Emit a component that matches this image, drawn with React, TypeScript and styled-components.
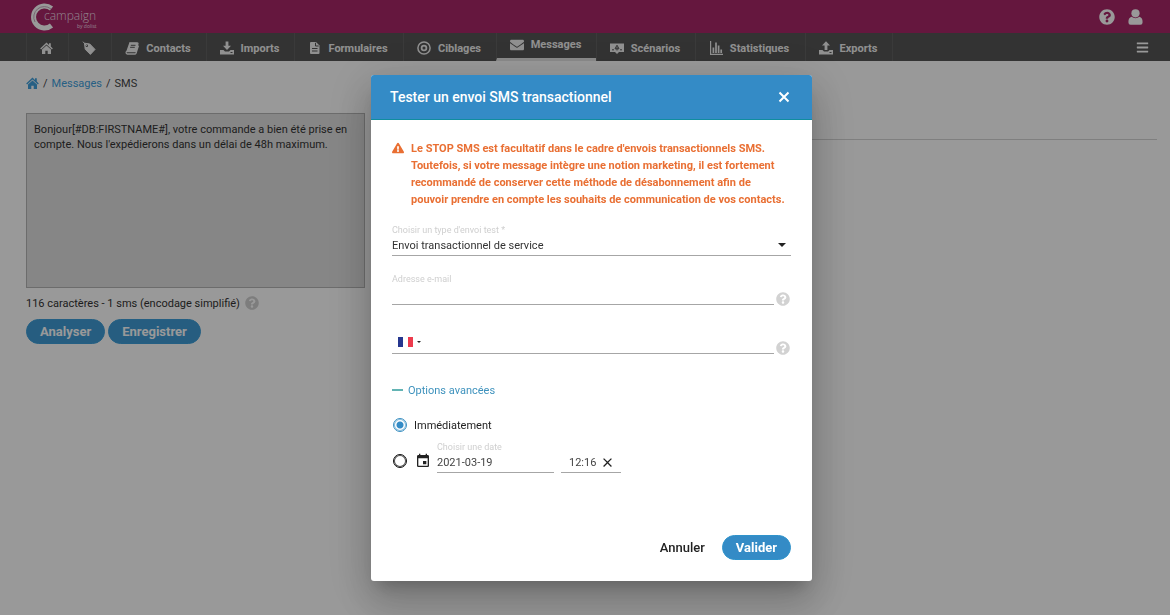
import React from "react";
import styled, { createGlobalStyle, css } from "styled-components";
import { FaEnvelope, FaQuestionCircle, FaExclamationTriangle, FaBars } from "react-icons/fa";
import { MdClose, MdEvent } from "react-icons/md";

const GlobalStyle = createGlobalStyle`
  * { box-sizing: border-box; }
  body {
    margin: 0;
    background: #fff;
    color: #333;
    font-family: Roboto, "Liberation Sans", sans-serif;
    font-size: 11px;
  }
  button, input, select, textarea { font-family: inherit; }
`;

const Page = styled.div`
  min-height: 100vh;
`;

const TopBar = styled.header`
  display: flex;
  align-items: center;
  justify-content: space-between;
  height: 33px;
  padding: 0 27px 0 30px;
  background: #a82768;
  color: #fff;
`;

const TopActions = styled.div`
  display: flex;
  gap: 13px;
`;

const IconButton = styled.button`
  display: flex;
  align-items: center;
  justify-content: center;
  padding: 0;
  border: 0;
  background: none;
  color: inherit;
  cursor: pointer;
`;

const NavBar = styled.nav`
  display: flex;
  align-items: stretch;
  height: 28px;
  padding: 0 21px 0 26px;
  background: #555;
  color: #fff;
`;

const NavItem = styled.a<{ $width: number; $active?: boolean }>`
  display: flex;
  align-items: center;
  justify-content: center;
  gap: 7px;
  width: ${(p) => p.$width}px;
  padding: 2px 2px 0 0;
  border-left: 1px solid #626262;
  color: #f0f0f0;
  font-size: 11px;
  font-weight: 700;
  text-decoration: none;
  svg { flex: none; }
  ${(p) => p.$active && css`
    padding: 0 2px 2px 0;
    border-bottom: 3px solid #e6e6e6;
  `}
`;

const NavEnd = styled.div`
  display: flex;
  flex: 1;
  justify-content: flex-end;
  border-left: 1px solid #626262;
`;

const Content = styled.main`
  display: grid;
  grid-template-columns: 339px 1fr;
  column-gap: 20px;
  padding: 14px 13px 0 26px;
`;

const Breadcrumb = styled.div`
  display: flex;
  align-items: center;
  gap: 4px;
  grid-column: 1 / -1;
  height: 16px;
  margin-bottom: 22px;
  color: #444;
  font-size: 11px;
  a { color: #41a0dc; text-decoration: none; }
  svg { display: block; }
`;

const MessageBox = styled.textarea`
  display: block;
  width: 100%;
  height: 175px;
  padding: 8px 7px;
  border: 1px solid #b5b5b5;
  background: #e0e0e0;
  color: #333;
  font-size: 11px;
  line-height: 15px;
  resize: none;
`;

const CountLine = styled.div`
  display: flex;
  align-items: center;
  gap: 5px;
  height: 14px;
  margin: 8px 0 9px;
  font-size: 11px;
  color: #333;
  svg { color: #d0d0d0; }
`;

const ButtonRow = styled.div`
  display: flex;
  gap: 3px;
`;

const PillButton = styled.button`
  height: 25px;
  padding: 0 13px;
  border: 1px solid #2f93cb;
  border-radius: 13px;
  background: #348bc6;
  color: #fff;
  font-size: 13px;
  font-weight: 700;
  cursor: pointer;
`;

const PagePillButton = styled(PillButton)`
  border-color: #3d9fda;
  background: #409cd6;
`;

const Preview = styled.section`
  height: 27px;
  border-bottom: 1px solid #d4d4d4;
`;

const Overlay = styled.div`
  position: fixed;
  inset: 0;
  display: flex;
  align-items: flex-start;
  justify-content: center;
  padding: 75px 0 0 13px;
  background: rgba(0, 0, 0, 0.4);
`;

const Dialog = styled.div`
  width: 441px;
  border-radius: 3px;
  overflow: hidden;
  background: #fff;
  box-shadow: 0 11px 15px -7px rgba(0, 0, 0, 0.2), 0 24px 38px 3px rgba(0, 0, 0, 0.14),
    0 9px 46px 8px rgba(0, 0, 0, 0.12);
`;

const DialogHeader = styled.div`
  display: flex;
  align-items: center;
  justify-content: space-between;
  height: 45px;
  padding: 0 20px 0 19px;
  border-bottom: 1px solid #108d9e;
  background: #348bc6;
  color: #fff;
`;

const DialogTitle = styled.h2`
  margin: 0;
  font-size: 14px;
  font-weight: 500;
`;

const DialogBody = styled.form`
  padding: 20px 21px 21px;
`;

const Warning = styled.div`
  display: flex;
  gap: 7px;
  margin-bottom: 17px;
  color: #e96f33;
  svg { flex: none; margin-top: 2px; }
`;

const WarningText = styled.p`
  margin: 0;
  font-size: 11px;
  font-weight: 700;
  line-height: 17px;
  white-space: nowrap;
`;

const FieldRow = styled.div`
  display: flex;
  align-items: flex-end;
  gap: 2px;
  margin-bottom: 18px;
  color: #d2d2d2;
`;

const Field = styled.div<{ $width?: number }>`
  display: flex;
  flex-direction: column;
  ${(p) => (p.$width ? css`width: ${p.$width}px;` : css`flex: 1;`)}
`;

const Label = styled.label`
  height: 10px;
  color: #cfcfcf;
  font-size: 9px;
  line-height: 10px;
`;

const Line = styled.div`
  display: flex;
  align-items: center;
  height: 21px;
  border-bottom: 1px solid #a6a6a6;
`;

const PhoneLine = styled(Line)`
  height: 31px;
  padding: 8px 0 0 6px;
`;

const TextInput = styled.input`
  flex: 1;
  min-width: 0;
  height: 18px;
  padding: 0;
  border: 0;
  outline: 0;
  background: transparent;
  color: #444;
  font-size: 11px;
`;

const Select = styled.select`
  flex: 1;
  height: 18px;
  padding: 0;
  border: 0;
  outline: 0;
  appearance: none;
  background: transparent;
  color: #333;
  font-size: 11px;
`;

const CaretBox = styled.span`
  display: flex;
  padding-right: 5px;
  pointer-events: none;
`;

const CountryButton = styled(IconButton)`
  gap: 4px;
  margin-right: 8px;
`;

const HelpButton = styled(IconButton)`
  margin: 0 1px -1px 0;
`;

const OptionsToggle = styled.button`
  display: flex;
  align-items: center;
  gap: 5px;
  height: 14px;
  margin-top: 29px;
  padding: 0;
  border: 0;
  background: none;
  color: #3e92bd;
  font-size: 11px;
  cursor: pointer;
`;

const Choice = styled.label`
  display: flex;
  align-items: center;
  gap: 7px;
  height: 16px;
  margin-top: 20px;
  padding-left: 1px;
  color: #222;
  font-size: 11px;
`;

const Radio = styled.input`
  flex: none;
  width: 14px;
  height: 14px;
  margin: 0;
  appearance: none;
  border: 1px solid #111;
  border-radius: 50%;
  box-shadow: inset 0 0 0 1px #555;
  &:checked {
    border-color: #3a8fc0;
    background: radial-gradient(circle, #348bc6 0 3px, #fff 4px);
    box-shadow: inset 0 0 0 1px #8fc0de;
  }
`;

const DateRow = styled.div`
  display: flex;
  align-items: flex-end;
  margin-top: 9px;
  padding-left: 1px;
`;

const DateChoice = styled.div`
  display: flex;
  align-items: center;
  gap: 8px;
  height: 25px;
  margin-right: 6px;
  color: #222;
`;

const TimeField = styled(Line)`
  width: 60px;
  margin-left: 7px;
  padding: 0 6px 0 8px;
`;

const Actions = styled.div`
  display: flex;
  align-items: center;
  justify-content: flex-end;
  gap: 17px;
  margin-top: 62px;
`;

const TextButton = styled.button`
  padding: 0;
  border: 0;
  background: none;
  color: #222;
  font-size: 13px;
  font-weight: 500;
  cursor: pointer;
`;

function Logo() {
  return (
    <svg width="68" height="30" viewBox="0 0 68 30" role="img" aria-label="Campaign by dolist">
      <path d="M21.500 6.500A11 11 0 1 0 21.500 23.500" fill="none" stroke="#fff" strokeWidth="5" />
      <path d="M21 7A10.500 10.500 0 0 0 5 20" fill="none" stroke="#c9a9bd" strokeWidth="1" />
      <text x="14" y="18" fill="#f0dce7" fontFamily="'Open Sans', sans-serif" fontSize="12" fontWeight="300">campaign</text>
      <text x="47" y="26" fill="#f0dce7" fontFamily="'Open Sans', sans-serif" fontSize="5">by dolist</text>
    </svg>
  );
}

function HomeIcon() {
  return (
    <svg width="13" height="12" viewBox="0 0 13 12" fill="currentColor">
      <path d="M6.500 .6 9 2.900V1.200h1.800v3.400L12.800 6.400l-.9 1L6.500 2.600 1.100 7.400l-.9-1z" />
      <path d="M6.500 3.500 11 7.400V12H7.700V8.700H5.300V12H2V7.400z" />
    </svg>
  );
}

function TagIcon() {
  return (
    <svg width="14" height="14" viewBox="0 0 14 14">
      <path d="M2.500 2.200 7.800 3 13 8.400 8.400 13.400 3.200 8.300z" fill="currentColor" stroke="currentColor" strokeLinejoin="round" />
      <circle cx="4.800" cy="4.800" r="1.200" fill="#555" />
      <path d="M4.800 5 1 .7" fill="none" stroke="currentColor" />
    </svg>
  );
}

function BookIcon() {
  return (
    <svg width="14" height="13" viewBox="0 0 14 13">
      <path d="M4.300.8H12.200q1 0 .7 1L10.400 9.500H2.200Q.9 9.500 1.200 11q.3 1 1.300 1h7.600q.7 0 .9-.6L13.500 3.500" fill="none" stroke="currentColor" strokeWidth="1.300" strokeLinejoin="round" />
      <path d="M4.300.8H12.200q1 0 .7 1L10.400 9.500H1.200z" fill="currentColor" />
      <path d="M5.800 3.300h4.700M5.100 5.300h4.700" stroke="#555" />
    </svg>
  );
}

function TrayIcon({ up }: { up?: boolean }) {
  return (
    <svg width="14" height="14" viewBox="0 0 14 14" fill="currentColor">
      <path d={up ? "M7 .3 11 4.500H8.400V9H5.600V4.500H3z" : "M5.600.5h2.800V4.700H11L7 9 3 4.700h2.600z"} />
      <path d="M0 9h3.500l1.500 1.500h4L10.500 9H14v4.500H0zM10.500 11v1h2v-1z" fillRule="evenodd" />
    </svg>
  );
}

function DocumentIcon() {
  return (
    <svg width="13" height="12" viewBox="0 0 13 12">
      <path d="M3 0h5l3.500 3.500V11q0 1-1 1H3q-1 0-1-1V1q0-1 1-1z" fill="currentColor" />
      <path d="M7.500.800V4h3.200M4 6.500h5.500M4 9h5.500" fill="none" stroke="#555" />
    </svg>
  );
}

function TargetIcon() {
  return (
    <svg width="14" height="14" viewBox="0 0 14 14" fill="none" stroke="currentColor">
      <circle cx="7" cy="7" r="6.100" strokeWidth="1.500" />
      <circle cx="7" cy="7" r="2.400" strokeWidth="1.700" />
    </svg>
  );
}

function ScenarioIcon() {
  return (
    <svg width="14" height="11" viewBox="0 0 14 11">
      <path d="M0 .5h14v8.500H9L7 11 5 9H0z" fill="currentColor" />
      <path d="M7 2.200 5 5.800h4zM7 4v3.500M2 6.800h2M10 6.800h2" stroke="#555" fill="none" />
    </svg>
  );
}

function ChartIcon() {
  return (
    <svg width="13" height="14" viewBox="0 0 13 14" fill="none" stroke="currentColor">
      <path d="M.6 0V13.300H13" strokeWidth="1.200" />
      <path d="M3.400 6.500V12M6 1.500V12M8.600 4.500V12M11.200 8.500V12" strokeWidth="1.700" />
    </svg>
  );
}

function PersonIcon() {
  return (
    <svg width="15" height="16" viewBox="0 0 15 16" fill="currentColor">
      <circle cx="7.500" cy="4.300" r="4.100" />
      <path d="M3.500 7.800Q7.500 10.500 11.500 7.800 14.600 8.600 14.600 13.200 14.600 15.800 12.400 15.800H2.600Q.4 15.800.4 13.200.4 8.600 3.500 7.800z" />
    </svg>
  );
}

function CrossIcon({ size }: { size: number }) {
  return (
    <svg width={size} height={size} viewBox="0 0 10 10">
      <path d="M.7.7 9.300 9.300M9.300.7.7 9.300" stroke="currentColor" strokeWidth="1.800" />
    </svg>
  );
}

function Caret({ size }: { size: number }) {
  return (
    <svg width={size} height={size / 2} viewBox="0 0 8 4" fill="#222">
      <path d="M0 0h8L4 4z" />
    </svg>
  );
}

function FrenchFlag() {
  return (
    <svg width="15" height="10" viewBox="0 0 15 10" role="img" aria-label="France">
      <path d="M0 0h5v10H0z" fill="#26378f" />
      <path d="M5 0h5v10H5z" fill="#fff" />
      <path d="M10 0h5v10h-5z" fill="#ed3b4d" />
    </svg>
  );
}

const navItems = [
  { name: "Accueil", width: 42, icon: <HomeIcon />, iconOnly: true },
  { name: "Offres", width: 43, icon: <TagIcon />, iconOnly: true },
  { name: "Contacts", width: 95, icon: <BookIcon /> },
  { name: "Imports", width: 88, icon: <TrayIcon /> },
  { name: "Formulaires", width: 109, icon: <DocumentIcon /> },
  { name: "Ciblages", width: 93, icon: <TargetIcon /> },
  { name: "Messages", width: 100, icon: <FaEnvelope size={14} />, active: true },
  { name: "Scénarios", width: 99, icon: <ScenarioIcon /> },
  { name: "Statistiques", width: 110, icon: <ChartIcon /> },
  { name: "Exports", width: 87, icon: <TrayIcon up /> },
];

export default function App() {
  return (
    <Page>
      <GlobalStyle />
      <TopBar>
        <Logo />
        <TopActions>
          <IconButton aria-label="Aide"><FaQuestionCircle size={16} /></IconButton>
          <IconButton aria-label="Compte"><PersonIcon /></IconButton>
        </TopActions>
      </TopBar>
      <NavBar>
        {navItems.map((item) => (
          <NavItem key={item.name} href="#" $width={item.width} $active={item.active} aria-label={item.name}>
            {item.icon}
            {!item.iconOnly && item.name}
          </NavItem>
        ))}
        <NavEnd>
          <IconButton aria-label="Menu"><FaBars size={13} /></IconButton>
        </NavEnd>
      </NavBar>
      <Content>
        <Breadcrumb>
          <a href="#" aria-label="Accueil"><HomeIcon /></a>
          <span>/</span>
          <a href="#">Messages</a>
          <span>/</span>
          <span>SMS</span>
        </Breadcrumb>
        <section>
          <MessageBox
            aria-label="Message"
            defaultValue="Bonjour[#DB:FIRSTNAME#], votre commande a bien été prise en compte. Nous l'expédierons dans un délai de 48h maximum."
          />
          <CountLine>
            116 caractères - 1 sms (encodage simplifié)
            <FaQuestionCircle size={14} />
          </CountLine>
          <ButtonRow>
            <PagePillButton>Analyser</PagePillButton>
            <PagePillButton>Enregistrer</PagePillButton>
          </ButtonRow>
        </section>
        <Preview />
      </Content>
      <Overlay>
        <Dialog role="dialog" aria-modal="true" aria-labelledby="dialog-title">
          <DialogHeader>
            <DialogTitle id="dialog-title">Tester un envoi SMS transactionnel</DialogTitle>
            <IconButton aria-label="Fermer">
              <svg width="16" height="16" viewBox="0 0 16 16">
                <path d="M3.500 3.500l9 9M12.500 3.500l-9 9" stroke="currentColor" strokeWidth="2" />
              </svg>
            </IconButton>
          </DialogHeader>
          <DialogBody onSubmit={(e) => e.preventDefault()}>
            <Warning>
              <FaExclamationTriangle size={12} />
              <WarningText>
                Le STOP SMS est facultatif dans le cadre d'envois transactionnels SMS.<br />
                Toutefois, si votre message intègre une notion marketing, il est fortement<br />
                recommandé de conserver cette méthode de désabonnement afin de<br />
                pouvoir prendre en compte les souhaits de communication de vos contacts.
              </WarningText>
            </Warning>
            <FieldRow>
              <Field>
                <Label htmlFor="type">Choisir un type d'envoi test *</Label>
                <Line>
                  <Select id="type"><option>Envoi transactionnel de service</option></Select>
                  <CaretBox><Caret size={8} /></CaretBox>
                </Line>
              </Field>
            </FieldRow>
            <FieldRow>
              <Field>
                <Label htmlFor="email">Adresse e-mail</Label>
                <Line><TextInput id="email" type="email" /></Line>
              </Field>
              <HelpButton type="button" aria-label="Aide e-mail"><FaQuestionCircle size={14} /></HelpButton>
            </FieldRow>
            <FieldRow>
              <Field>
                <PhoneLine>
                  <CountryButton type="button" aria-label="Pays"><FrenchFlag /><Caret size={4} /></CountryButton>
                  <TextInput type="tel" aria-label="Téléphone" />
                </PhoneLine>
              </Field>
              <HelpButton type="button" aria-label="Aide téléphone"><FaQuestionCircle size={14} /></HelpButton>
            </FieldRow>
            <OptionsToggle type="button">
              <svg width="11" height="2" viewBox="0 0 11 2"><path d="M0 1h11" stroke="#2f9b9b" strokeWidth="1.500" /></svg>
              Options avancées
            </OptionsToggle>
            <Choice>
              <Radio type="radio" name="when" defaultChecked />
              Immédiatement
            </Choice>
            <DateRow>
              <DateChoice>
                <Radio type="radio" name="when" aria-label="À une date choisie" />
                <MdEvent size={16} />
              </DateChoice>
              <Field $width={117}>
                <Label htmlFor="date">Choisir une date</Label>
                <Line><TextInput id="date" defaultValue="2021-03-19" /></Line>
              </Field>
              <TimeField>
                <TextInput aria-label="Heure" defaultValue="12:16" />
                <IconButton type="button" aria-label="Effacer"><MdClose size={15} color="#222" /></IconButton>
              </TimeField>
            </DateRow>
            <Actions>
              <TextButton type="button">Annuler</TextButton>
              <PillButton type="submit">Valider</PillButton>
            </Actions>
          </DialogBody>
        </Dialog>
      </Overlay>
    </Page>
  );
}
